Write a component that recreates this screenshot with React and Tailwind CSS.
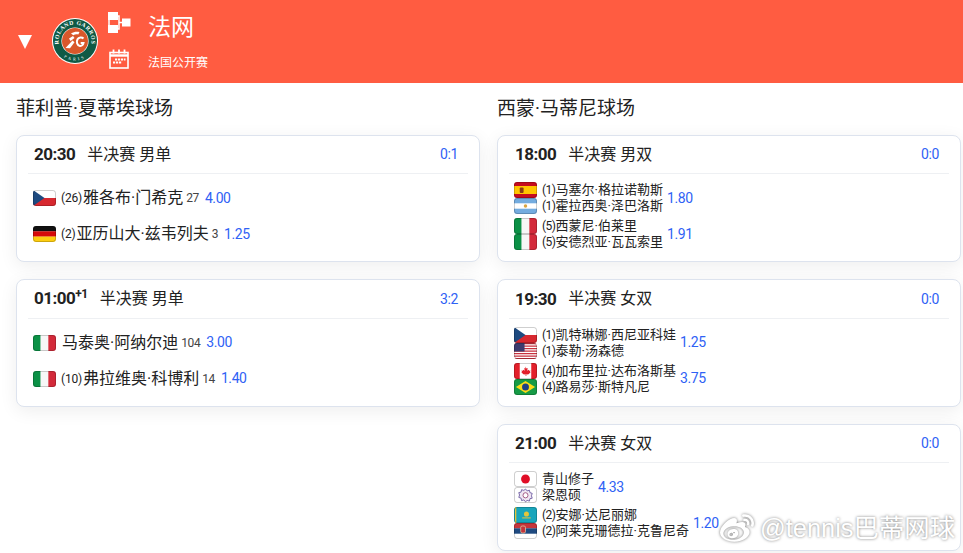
import React from "react";
import { FaWeibo } from "react-icons/fa";

const F = { cz: CZ, de: DE, it: IT, es: ES, ar: AR, us: US, ca: CA, br: BR, jp: JP, tw: TW, kz: KZ, rs: RS };

function Svg({ children }) {
  return <svg viewBox="0 0 24 16" preserveAspectRatio="none" className="block w-full h-full">{children}</svg>;
}
function CZ() { return <Svg><rect width="24" height="8" fill="#fff"/><rect y="8" width="24" height="8" fill="#d7282f"/><path d="M0 0L12 8L0 16Z" fill="#1d4a80"/></Svg>; }
function DE() { return <Svg><rect width="24" height="5.4" fill="#111"/><rect y="5.3" width="24" height="5.4" fill="#d60a0a"/><rect y="10.6" width="24" height="5.4" fill="#fdcd10"/></Svg>; }
function IT() { return <Svg><rect width="8" height="16" fill="#0b9146"/><rect x="8" width="8" height="16" fill="#f7f7f7"/><rect x="16" width="8" height="16" fill="#d32a3a"/></Svg>; }
function ES() { return <Svg><rect width="24" height="16" fill="#c60b1e"/><rect y="4" width="24" height="8" fill="#ffc400"/><rect x="6" y="5.500" width="4" height="5.500" rx="1" fill="#8a3b12"/></Svg>; }
function AR() { return <Svg><rect width="24" height="16" fill="#74acdf"/><rect y="5.3" width="24" height="5.4" fill="#fff"/><circle cx="12" cy="8" r="1.8" fill="#d9a441"/></Svg>; }
function US() { return <Svg><rect width="24" height="16" fill="#fff"/>{[0,2.5,5,7.5,10,12.5,15].map(y=><rect key={y} y={y} width="24" height="1.25" fill="#c8313e"/>)}<rect width="11" height="8.5" fill="#3c3b6e"/></Svg>; }
function CA() { return <Svg><rect width="24" height="16" fill="#fff"/><rect width="6" height="16" fill="#e3202b"/><rect x="18" width="6" height="16" fill="#e3202b"/><path d="M12 3.5l1 2 1.3-.6-.5 2.8 1.6-1 .4 1 1.4-.2-.5 1.6.6.4-2.6 2-1.9-.3.1 1.8h-.8l.1-1.8-1.9.3-2.6-2 .6-.4-.5-1.6 1.4.2.4-1 1.6 1-.5-2.8 1.3.6z" fill="#e3202b"/></Svg>; }
function BR() { return <Svg><rect width="24" height="16" fill="#169b46"/><path d="M12 2L22 8L12 14L2 8Z" fill="#fbdc16"/><circle cx="12" cy="8" r="3.6" fill="#1f3f84"/></Svg>; }
function JP() { return <Svg><rect width="24" height="16" fill="#fff"/><circle cx="12" cy="8" r="4.6" fill="#e00d26"/></Svg>; }
function TW() { return <Svg><rect width="24" height="16" fill="#fff"/><path d="M12 2l1.700 1.900 2.400-.7.500 2.400 2.400.8-.8 2.400.800 2.400-2.400.5-.5 2.400-2.400-.7L12 14.800l-1.700-1.900-2.400.7-.5-2.400-2.400-.8.800-2.400-.8-2.400 2.400-.5.500-2.400 2.400.7z" fill="#efe6f2" stroke="#6c5aa0" strokeWidth=".9"/><circle cx="12" cy="8.300" r="2.600" fill="#fff" stroke="#9a4a7a" strokeWidth=".9"/></Svg>; }
function KZ() { return <Svg><rect width="24" height="16" fill="#18a5bb"/><rect x="1" width="1.4" height="16" fill="#e5c53a"/><circle cx="13" cy="7" r="2.6" fill="#e5c53a"/><rect x="8.5" y="10.4" width="9" height="1" fill="#e5c53a"/></Svg>; }
function RS() { return <Svg><rect width="24" height="16" fill="#fff"/><rect width="24" height="5.4" fill="#c6363c"/><rect y="5.3" width="24" height="5.4" fill="#1f4a80"/><rect x="7" y="3" width="5" height="7" rx="1.5" fill="#c6363c" stroke="#e8d9b0" strokeWidth=".7"/></Svg>; }

function Flag({ c }) {
  const C = F[c];
  return (
    <div className="w-[23px] h-4 rounded-[3px] overflow-hidden shrink-0 outline outline-1 -outline-offset-1 outline-[#00000030]">
      <C />
    </div>
  );
}

function Odds({ v, cls = "" }) {
  return <span className={"text-[14px] tracking-[-0.4px] text-[#2f62f5] " + cls}>{v}</span>;
}

function SingleRow({ flag, seed, name, rank, odds }) {
  return (
    <div className="h-9 flex items-center pl-4">
      <Flag c={flag} />
      <div className={"flex items-center text-base text-[#222] whitespace-nowrap " + (seed ? "ml-[5px]" : "ml-[6px]")}>
        {seed ? <span className="text-xs tracking-[-0.2px] mr-[1px]">({seed})</span> : null}
        <span>{name}</span>
      </div>
      <span className="text-xs tracking-[-0.4px] text-[#444] ml-[3px]">{rank}</span>
      <Odds v={odds} cls="ml-[6px]" />
    </div>
  );
}

function DoubleRow({ p, odds }) {
  return (
    <div className="h-9 flex items-center pl-4">
      <div className="flex flex-col shrink-0">
        <Flag c={p[0].f} />
        <Flag c={p[1].f} />
      </div>
      <div className="flex flex-col ml-[5px] text-[13px] leading-4 text-[#222] whitespace-nowrap">
        {p.map((x, i) => (
          <div key={i} className="flex items-center h-4">
            {x.s ? <span className="text-xs tracking-[-0.5px]">({x.s})</span> : null}
            <span>{x.n}</span>
          </div>
        ))}
      </div>
      <Odds v={odds} cls="ml-1" />
    </div>
  );
}

function Card({ time, sup, title, score, children }) {
  return (
    <div className="h-[127.5px] bg-white border border-[#dde3ee] rounded-lg shadow-[0_4px_18px_rgba(0,0,0,0.07)]">
      <div className="h-[38.4px] mx-[11px] border-b border-[#eef0f3] flex items-center justify-between pl-[6px] pr-[10px] pt-[1px]">
        <div className="flex items-center text-[#222]">
          <span className="font-bold text-[17px] tracking-[-0.5px] leading-none text-[#222]">
            {time}
            {sup ? <sup className="text-xs font-bold">{sup}</sup> : null}
          </span>
          <span className="text-base ml-3">{title}</span>
        </div>
        <span className="text-[14px] tracking-[-0.4px] text-[#2f62f5]">{score}</span>
      </div>
      <div className="pt-[6px]">{children}</div>
    </div>
  );
}

function Bracket() {
  return (
    <svg width="23" height="21" viewBox="0 0 23 21" fill="none">
      <rect x="0" y="0" width="10" height="8" fill="#fff"/>
      <rect x="0" y="13" width="10" height="8" fill="#fff"/>
      <path d="M1 8v5M10 4h1v13h-1M11 10.500h4" stroke="#fff" strokeWidth="1.500"/>
      <rect x="14" y="6.500" width="8.500" height="8" fill="#fff"/>
    </svg>
  );
}

function Calendar() {
  return (
    <svg width="20" height="20" viewBox="0 0 20 20" fill="none">
      <rect x="1" y="3.500" width="18" height="15.500" stroke="#fff" strokeWidth="1.600"/>
      <path d="M1 6.500h18" stroke="#fff" strokeWidth="2.400"/>
      <path d="M4.500 0.500v4M10 0.500v4M15.500 0.500v4" stroke="#fff" strokeWidth="1.800"/>
      <path d="M6 9.500h2.200v2H6zM9 9.500h2.200v2H9zM12 9.500h2.200v2H12zM15 9.500h1.500v2H15zM4 12.500h2.200v2H4zM7 12.500h2.200v2H7zM10 12.500h2.200v2H10z" fill="#fff"/>
    </svg>
  );
}

function Logo() {
  return (
    <svg width="46" height="46" viewBox="0 0 46 46">
      <defs>
        <path id="rgTop" d="M8.700 31A16.400 16.400 0 1 1 37.300 31" />
        <path id="rgBot" d="M5.200 31A19.500 19.500 0 0 0 40.800 31" />
      </defs>
      <circle cx="23" cy="23" r="23" fill="#fff"/>
      <circle cx="23" cy="23" r="22" fill="#0f5a45"/>
      <circle cx="23" cy="23" r="13.600" fill="#fff"/>
      <circle cx="23" cy="23" r="13" fill="#d9582b"/>
      <text fill="#fff" fontSize="5.800" fontFamily="'Liberation Serif', serif" fontWeight="700" letterSpacing=".5">
        <textPath href="#rgTop" startOffset="50%" textAnchor="middle">ROLAND GARROS</textPath>
      </text>
      <text fill="#fff" fontSize="4.200" fontFamily="'Liberation Serif', serif" letterSpacing="2.400">
        <textPath href="#rgBot" startOffset="50%" textAnchor="middle">PARIS</textPath>
      </text>
      <path d="M19 15.500c2.800-1.800 5.600-2.200 8.500-1.500l-1.200 2.400c-1.800-.4-3.400-.2-5 .8zM17 20.500l4-2.500 1.500 2-4 3zM13.500 30l7-7.500 2 1.800-4.500 6z" fill="#fff"/>
      <path d="M31.500 20.500c-1.600-1.600-4.800-1.400-6 .8-1.400 2.600-.4 6.200 2.400 6.600 2 .2 3.200-1 3.600-3h-2.800" stroke="#fff" strokeWidth="2" fill="none"/>
    </svg>
  );
}

export default function App() {
  return (
    <div className="w-[963px] h-[553px] overflow-hidden bg-white relative font-['Roboto','Noto_Sans_CJK_SC',sans-serif]">
      <header className="h-[83px] bg-[#ff5c41] flex items-center pl-[18px] text-white">
        <div className="w-0 h-0 border-l-[7px] border-r-[7px] border-t-[14px] border-l-transparent border-r-transparent border-t-white mt-[1px]" />
        <div className="ml-5 mt-[-1px]"><Logo /></div>
        <div className="ml-[10px] flex flex-col items-start gap-4 -mt-[2px]">
          <Bracket />
          <div className="ml-[1px]"><Calendar /></div>
        </div>
        <div className="ml-[17px] flex flex-col">
          <span className="text-[23px] leading-[30px]">法网</span>
          <span className="text-xs leading-4 mt-[12px]">法国公开赛</span>
        </div>
      </header>
      <main className="grid grid-cols-[464px_464px] gap-x-[17px] pl-4 text-[#222]">
        <section>
          <h3 className="text-[19px] leading-[26px] mt-[13px] mb-[12.8px] text-[#222]">菲利普·夏蒂埃球场</h3>
          <div className="flex flex-col gap-[17px]">
            <Card time="20:30" title="半决赛 男单" score="0:1">
              <SingleRow flag="cz" seed="26" name="雅各布·门希克" rank="27" odds="4.00" />
              <SingleRow flag="de" seed="2" name="亚历山大·兹韦列夫" rank="3" odds="1.25" />
            </Card>
            <Card time="01:00" sup="+1" title="半决赛 男单" score="3:2">
              <SingleRow flag="it" name="马泰奥·阿纳尔迪" rank="104" odds="3.00" />
              <SingleRow flag="it" seed="10" name="弗拉维奥·科博利" rank="14" odds="1.40" />
            </Card>
          </div>
        </section>
        <section>
          <h3 className="text-[19px] leading-[26px] mt-[13px] mb-[12.8px] text-[#222]">西蒙·马蒂尼球场</h3>
          <div className="flex flex-col gap-[17px]">
            <Card time="18:00" title="半决赛 男双" score="0:0">
              <DoubleRow odds="1.80" p={[{ f: "es", s: "1", n: "马塞尔·格拉诺勒斯" }, { f: "ar", s: "1", n: "霍拉西奥·泽巴洛斯" }]} />
              <DoubleRow odds="1.91" p={[{ f: "it", s: "5", n: "西蒙尼·伯莱里" }, { f: "it", s: "5", n: "安德烈亚·瓦瓦索里" }]} />
            </Card>
            <Card time="19:30" title="半决赛 女双" score="0:0">
              <DoubleRow odds="1.25" p={[{ f: "cz", s: "1", n: "凯特琳娜·西尼亚科娃" }, { f: "us", s: "1", n: "泰勒·汤森德" }]} />
              <DoubleRow odds="3.75" p={[{ f: "ca", s: "4", n: "加布里拉·达布洛斯基" }, { f: "br", s: "4", n: "路易莎·斯特凡尼" }]} />
            </Card>
            <Card time="21:00" title="半决赛 女双" score="0:0">
              <DoubleRow odds="4.33" p={[{ f: "jp", n: "青山修子" }, { f: "tw", n: "梁恩硕" }]} />
              <DoubleRow odds="1.20" p={[{ f: "kz", s: "2", n: "安娜·达尼丽娜" }, { f: "rs", s: "2", n: "阿莱克珊德拉·克鲁尼奇" }]} />
            </Card>
          </div>
        </section>
      </main>
      <div className="absolute left-[720px] top-[512px] flex items-center text-white">
        <FaWeibo className="w-[34px] h-[34px] text-white [filter:drop-shadow(0_0_1.5px_#777)]" />
        <span className="ml-[6px] text-[25.4px] leading-none whitespace-nowrap [text-shadow:0_0_3px_#777] font-['Liberation_Sans','Noto_Sans_CJK_SC',sans-serif]">@tennis巴蒂网球</span>
      </div>
    </div>
  );
}
